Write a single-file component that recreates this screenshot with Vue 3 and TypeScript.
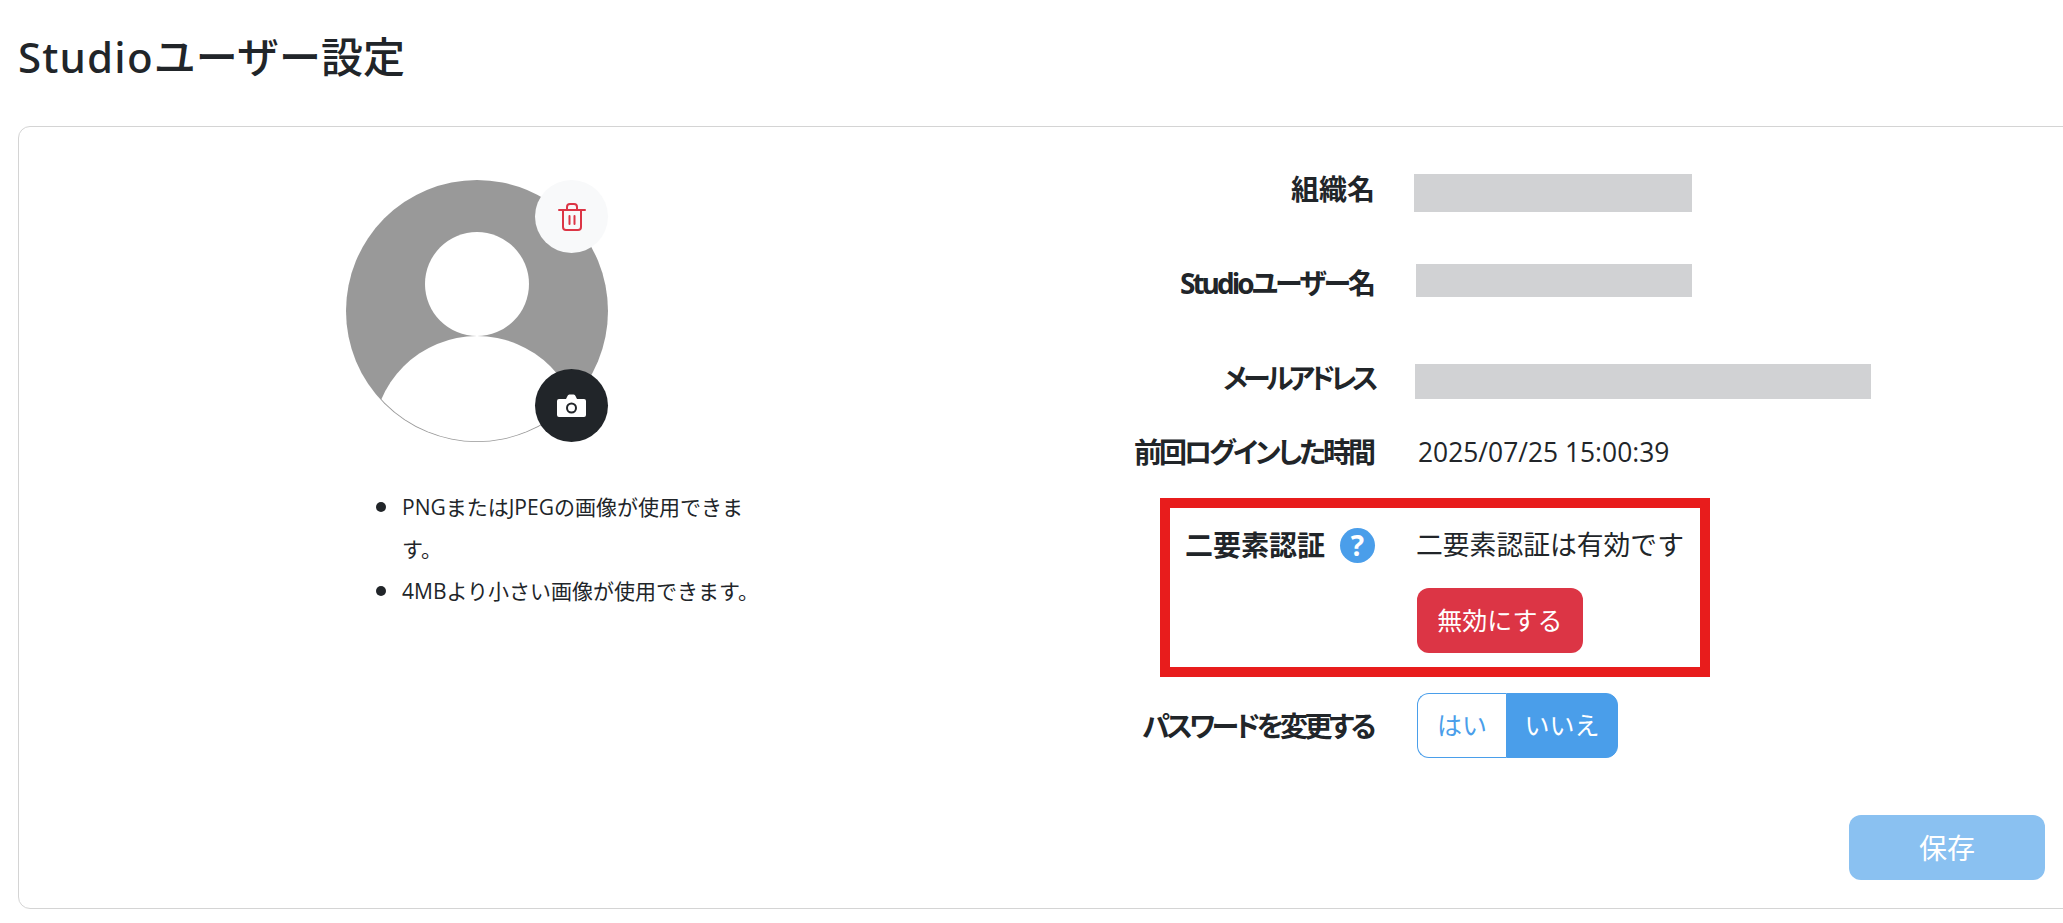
<template>
  <div class="page">
    <h1 class="title"><span class="title-latin">Studio</span>ユーザー設定</h1>
    <div class="card">
      <div class="profile">
        <div class="avatar">
          <svg class="avatar-img" viewBox="0 0 262 262">
            <defs>
              <clipPath id="avatar-clip"><circle cx="131" cy="131" r="130.200"></circle></clipPath>
            </defs>
            <circle cx="131" cy="131" r="131" fill="#999999"></circle>
            <circle cx="131" cy="104" r="52" fill="#ffffff"></circle>
            <circle cx="131" cy="260" r="104" fill="#ffffff" clip-path="url(#avatar-clip)"></circle>
          </svg>
          <button class="avatar-btn delete-btn" type="button">
            <svg viewBox="0 0 28 28" width="28" height="28" fill="none" stroke="#dc3545" stroke-width="2" stroke-linecap="round" stroke-linejoin="round">
              <path d="M1 7h26"></path>
              <path d="M5 7v17a3 3 0 0 0 3 3h12a3 3 0 0 0 3-3V7"></path>
              <path d="M9 7V4a3 3 0 0 1 3-3h4a3 3 0 0 1 3 3v3"></path>
              <path d="M11.5 13v8"></path>
              <path d="M16.5 13v8"></path>
            </svg>
          </button>
          <button class="avatar-btn camera-btn" type="button">
            <svg viewBox="0 0 29 24" width="29" height="24">
              <path fill="#ffffff" d="M2 5h7l1.5-3a2 2 0 0 1 2-1.500h4a2 2 0 0 1 2 1.500L20 5h7a2 2 0 0 1 2 2v14a2 2 0 0 1-2 2H2a2 2 0 0 1-2-2V7a2 2 0 0 1 2-2z"></path>
              <circle cx="14.500" cy="14" r="4.500" fill="#ffffff" stroke="#212529" stroke-width="2"></circle>
            </svg>
          </button>
        </div>
        <ul class="notes">
          <li v-for="note in notes" :key="note">{{ note }}</li>
        </ul>
      </div>

      <div class="form">
        <div class="row row-org">
          <label class="label">組織名</label>
          <div class="redacted redacted-org"></div>
        </div>
        <div class="row row-user">
          <label class="label label-user">Studioユーザー名</label>
          <div class="redacted redacted-user"></div>
        </div>
        <div class="row row-mail">
          <label class="label label-mail">メールアドレス</label>
          <div class="redacted redacted-mail"></div>
        </div>
        <div class="row row-login">
          <label class="label label-login">前回ログインした時間</label>
          <span class="value date">2025/07/25 15:00:39</span>
        </div>
        <div class="row-2fa">
          <div class="label label-2fa">
            <span>二要素認証</span>
            <span class="help">?</span>
          </div>
          <div class="value-2fa">
            <div class="value status">二要素認証は有効です</div>
            <button class="btn btn-danger" type="button">無効にする</button>
          </div>
          <div class="highlight"></div>
        </div>
        <div class="row row-password">
          <label class="label label-password">パスワードを変更する</label>
          <div class="toggle">
            <button class="toggle-item" type="button">はい</button>
            <button class="toggle-item active" type="button">いいえ</button>
          </div>
        </div>
        <div class="actions">
          <button class="btn btn-save" type="button">保存</button>
        </div>
      </div>
    </div>
  </div>
</template>

<script setup lang="ts">
const notes: string[] = [
  'PNGまたはJPEGの画像が使用できます。',
  '4MBより小さい画像が使用できます。'
]
</script>

<style>
html,
body {
  margin: 0;
  background: #ffffff;
  overflow: hidden;
}
</style>

<style scoped>
.page {
  height: 923px;
  padding-left: 18px;
  box-sizing: border-box;
  overflow: hidden;
  color: #212529;
  font-family: "Open Sans", "Noto Sans CJK JP", sans-serif;
}

.title {
  margin: 0;
  height: 126px;
  padding-top: 30px;
  box-sizing: border-box;
  font-family: "Noto Sans", "Noto Sans CJK JP", sans-serif;
  font-size: 42px;
  font-weight: 500;
  line-height: 54px;
}

.title-latin {
  letter-spacing: 1.2px;
}

.card {
  display: flex;
  width: 2100px;
  height: 783px;
  box-sizing: border-box;
  border: 1px solid #d4d4d4;
  border-radius: 12px;
}

.profile {
  width: 1000px;
  flex-shrink: 0;
  padding-top: 53px;
  box-sizing: border-box;
}

.avatar {
  position: relative;
  width: 262px;
  height: 262px;
  margin-left: 327px;
}

.avatar-img {
  display: block;
  width: 262px;
  height: 262px;
}

.avatar-btn {
  position: absolute;
  right: 0;
  display: flex;
  align-items: center;
  justify-content: center;
  width: 73px;
  height: 73px;
  padding: 0;
  border: none;
  border-radius: 50%;
}

.delete-btn {
  top: 0;
  background: #f8f9fa;
}

.camera-btn {
  bottom: 0;
  background: #212529;
}

.notes {
  width: 368px;
  margin: 44px 0 0 361px;
  padding: 0 0 0 22px;
  list-style: none;
  font-size: 21px;
  line-height: 42px;
}

.notes li {
  position: relative;
}

.notes li::before {
  content: "";
  position: absolute;
  left: -26px;
  top: 16px;
  width: 10px;
  height: 10px;
  border-radius: 50%;
  background: #212529;
}

.form {
  width: 1026px;
  flex-shrink: 0;
  padding-top: 23px;
  box-sizing: border-box;
}

.row {
  display: flex;
  align-items: center;
  gap: 42px;
}

.label {
  width: 356px;
  box-sizing: border-box;
  flex-shrink: 0;
  text-align: right;
  font-size: 28px;
  font-weight: 700;
  line-height: 40px;
  font-feature-settings: "palt";
}

.label-user {
  letter-spacing: -3px;
  padding-right: 2px;
}

.label-mail {
  letter-spacing: -4.500px;
  padding-right: 1px;
}

.label-login {
  letter-spacing: -3px;
  padding-right: 2px;
}

.label-password {
  letter-spacing: -3.500px;
  padding-right: 2px;
}

.value {
  font-size: 26.800px;
  line-height: 50px;
}

.date {
  font-size: 26.400px;
  margin-left: 1px;
}

.row-org,
.row-user,
.row-mail {
  height: 78px;
}

.row-user {
  margin-top: 16px;
}

.row-mail {
  margin-top: 17px;
}

.row-login {
  height: 56px;
  margin-top: 7px;
}

.redacted {
  background: #d1d2d4;
}

.redacted-org {
  width: 278px;
  height: 38px;
  margin: 8px 0 0 -3px;
}

.redacted-user {
  width: 276px;
  height: 33px;
  margin: 0 0 5px -1px;
}

.redacted-mail {
  width: 456px;
  height: 35px;
  margin: 7px 0 0 -2px;
}

.row-2fa {
  position: relative;
  display: flex;
  gap: 42px;
  margin-top: 40px;
}

.label-2fa {
  display: flex;
  align-items: center;
  justify-content: flex-end;
  gap: 15px;
  height: 50px;
  font-feature-settings: normal;
}

.help {
  display: flex;
  align-items: center;
  justify-content: center;
  width: 35px;
  height: 35px;
  border-radius: 50%;
  background: #4a9eea;
  color: #ffffff;
  font-size: 28px;
  font-weight: 700;
  line-height: 35px;
}

.value-2fa {
  display: flex;
  flex-direction: column;
  align-items: flex-start;
}

.status {
  height: 50px;
  margin-left: -1px;
}

.btn {
  height: 65px;
  border: none;
  border-radius: 12px;
  color: #ffffff;
  font-family: inherit;
  font-size: 25px;
  line-height: 1;
}

.btn-danger {
  width: 166px;
  margin-top: 18px;
  background: #dc3545;
}

.highlight {
  position: absolute;
  left: 141px;
  top: -22px;
  width: 550px;
  height: 179px;
  box-sizing: border-box;
  border: 10px solid #e81c1c;
  pointer-events: none;
}

.row-password {
  height: 65px;
  margin-top: 40px;
}

.toggle {
  display: flex;
  height: 65px;
}

.toggle-item {
  height: 65px;
  padding: 0;
  box-sizing: border-box;
  border: 1px solid #4a9eea;
  background: #ffffff;
  color: #4a9eea;
  font-family: inherit;
  font-size: 25px;
  line-height: 1;
}

.toggle-item:first-child {
  width: 89px;
  border-right: none;
  border-radius: 12px 0 0 12px;
}

.toggle-item.active {
  width: 112px;
  background: #4a9eea;
  color: #ffffff;
  border-radius: 0 12px 12px 0;
}

.actions {
  display: flex;
  justify-content: flex-end;
  margin-top: 57px;
}

.btn-save {
  width: 196px;
  background: #8ac1f1;
  font-size: 28px;
}
</style>
